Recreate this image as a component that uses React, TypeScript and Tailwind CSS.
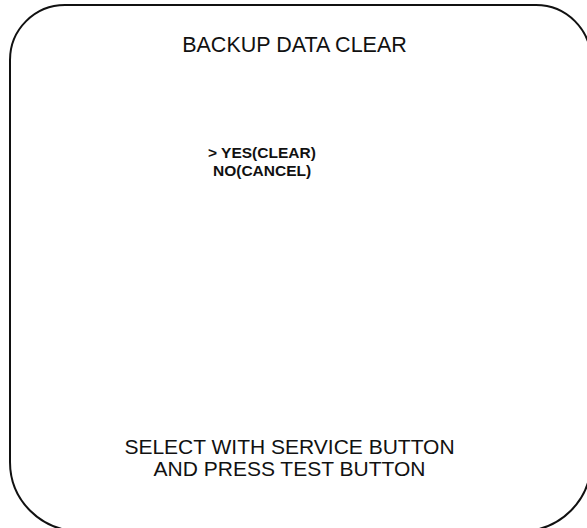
export default function App() {
  return (
    <div className="relative h-[528px] w-[587px] overflow-hidden bg-white font-['Liberation_Sans',Arial,sans-serif] text-[#111]">
      {/* screen frame, runs off the right and bottom edge of the scan */}
      <div className="ml-[9px] mt-[4px] flex h-[528px] w-[583px] flex-col rounded-t-[56px] rounded-b-[70px] border-2 border-[#111]">
        {/* TITLE */}
        <div className="mt-[29px] pr-[12px] text-center text-[21.5px] leading-[21px]">
          BACKUP DATA CLEAR
        </div>

        {/* MENU */}
        <div className="ml-[197px] mt-[88px] whitespace-pre text-[15.5px] font-bold leading-[18px]">
          <div>&gt; YES(CLEAR)</div>
          <div className="pl-[5px]">NO(CANCEL)</div>
        </div>

        {/* FOOTER */}
        <div className="mt-[256px] pr-[22px] text-center text-[21px] leading-[21.5px]">
          <p>SELECT WITH SERVICE BUTTON</p>
          <p>AND PRESS TEST BUTTON</p>
        </div>
      </div>
    </div>
  );
}
